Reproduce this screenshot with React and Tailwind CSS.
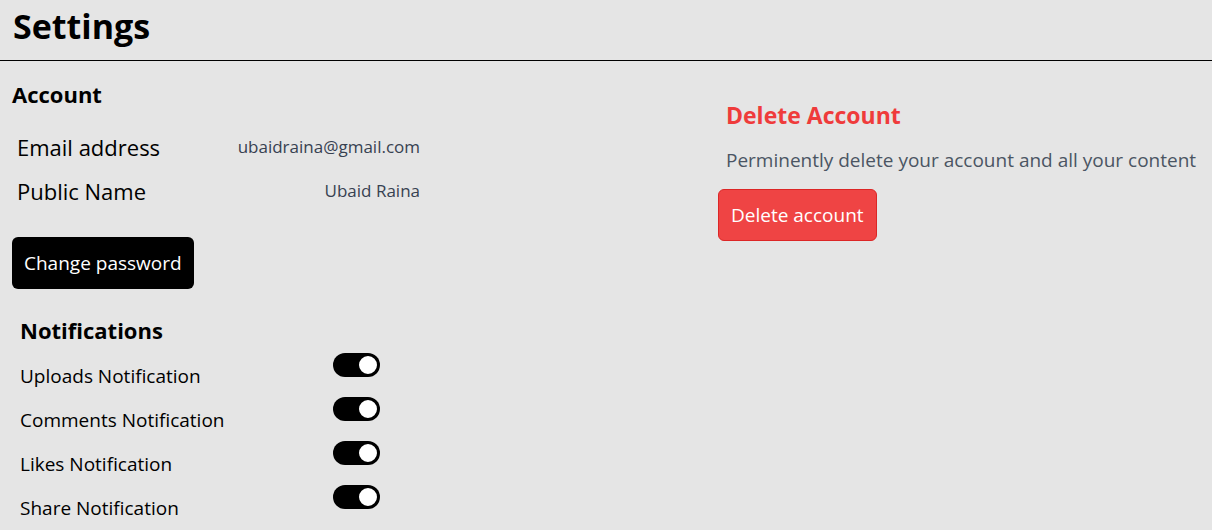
import React, { useState } from 'react'

const font = { fontFamily: '"Segoe UI", "Open Sans", sans-serif' }

function Toggle({ on, onChange }) {
    return (
        <button
            onClick={onChange}
            className={`w-[47px] h-[24px] rounded-full flex items-center p-[1px] ${on ? 'bg-black justify-end' : 'bg-gray-400 justify-start'}`}
        >
            <span className="block w-[22px] h-[22px] rounded-full bg-white border-2 border-black" />
        </button>
    )
}

export default function App() {
    const [toggles, setToggles] = useState({
        uploads: true,
        comments: true,
        likes: true,
        share: true,
    })

    const rows = [
        { key: 'uploads', label: 'Uploads Notification' },
        { key: 'comments', label: 'Comments Notification' },
        { key: 'likes', label: 'Likes Notification' },
        { key: 'share', label: 'Share Notification' },
    ]

    return (
        <div className="min-h-screen bg-[#e5e5e5] text-black" style={font}>
            {/* шапка */}
            <div className="border-b border-black px-[13px] pt-[4px] h-[61px]">
                <h1 className="text-[34px] font-bold leading-[44px]">Settings</h1>
            </div>

            <div className="flex">
                {/* левая колонка */}
                <div className="w-[718px] pl-3 pt-[18px]">
                    <h2 className="text-[22px] font-bold leading-[30px]">Account</h2>

                    <div className="w-[408px] pl-[5px] mt-[22px] flex flex-col gap-3">
                        <div className="flex justify-between items-center h-8">
                            <span className="text-[22px]">Email address</span>
                            <span className="text-[17px] text-[#374151]">ubaidraina@gmail.com</span>
                        </div>
                        <div className="flex justify-between items-center h-8">
                            <span className="text-[22px]">Public Name</span>
                            <span className="text-[17px] text-[#374151]">Ubaid Raina</span>
                        </div>
                    </div>

                    <button className="mt-[30px] h-[52px] px-3 rounded-md bg-black text-white text-[19px]">
                        Change password
                    </button>

                    <div className="pl-[8px] mt-[26px]">
                        <h2 className="text-[22px] font-bold leading-[30px]">Notifications</h2>
                        <div className="mt-[8px] flex flex-col">
                            {rows.map((r) => (
                                <div key={r.key} className="flex items-start h-[44px]">
                                    <span className="w-[313px] text-[19px] leading-[28px] mt-[9px]">{r.label}</span>
                                    <Toggle
                                        on={toggles[r.key]}
                                        onChange={() => setToggles({ ...toggles, [r.key]: !toggles[r.key] })}
                                    />
                                </div>
                            ))}
                        </div>
                    </div>
                </div>

                {/* правая колонка */}
                <div className="flex-1 pt-[38px]">
                    <h2 className="pl-2 text-[23px] font-bold leading-[32px] text-[#ef3b3b]">Delete Account</h2>
                    <p className="pl-2 mt-[15px] text-[19px] leading-[28px] text-[#4b5563]">
                        Perminently delete your account and all your content
                    </p>
                    <button className="mt-[15px] h-[52px] px-3 rounded-md bg-[#ef4444] border border-[#dc2626] text-white text-[19px]">
                        Delete account
                    </button>
                </div>
            </div>
        </div>
    )
}
